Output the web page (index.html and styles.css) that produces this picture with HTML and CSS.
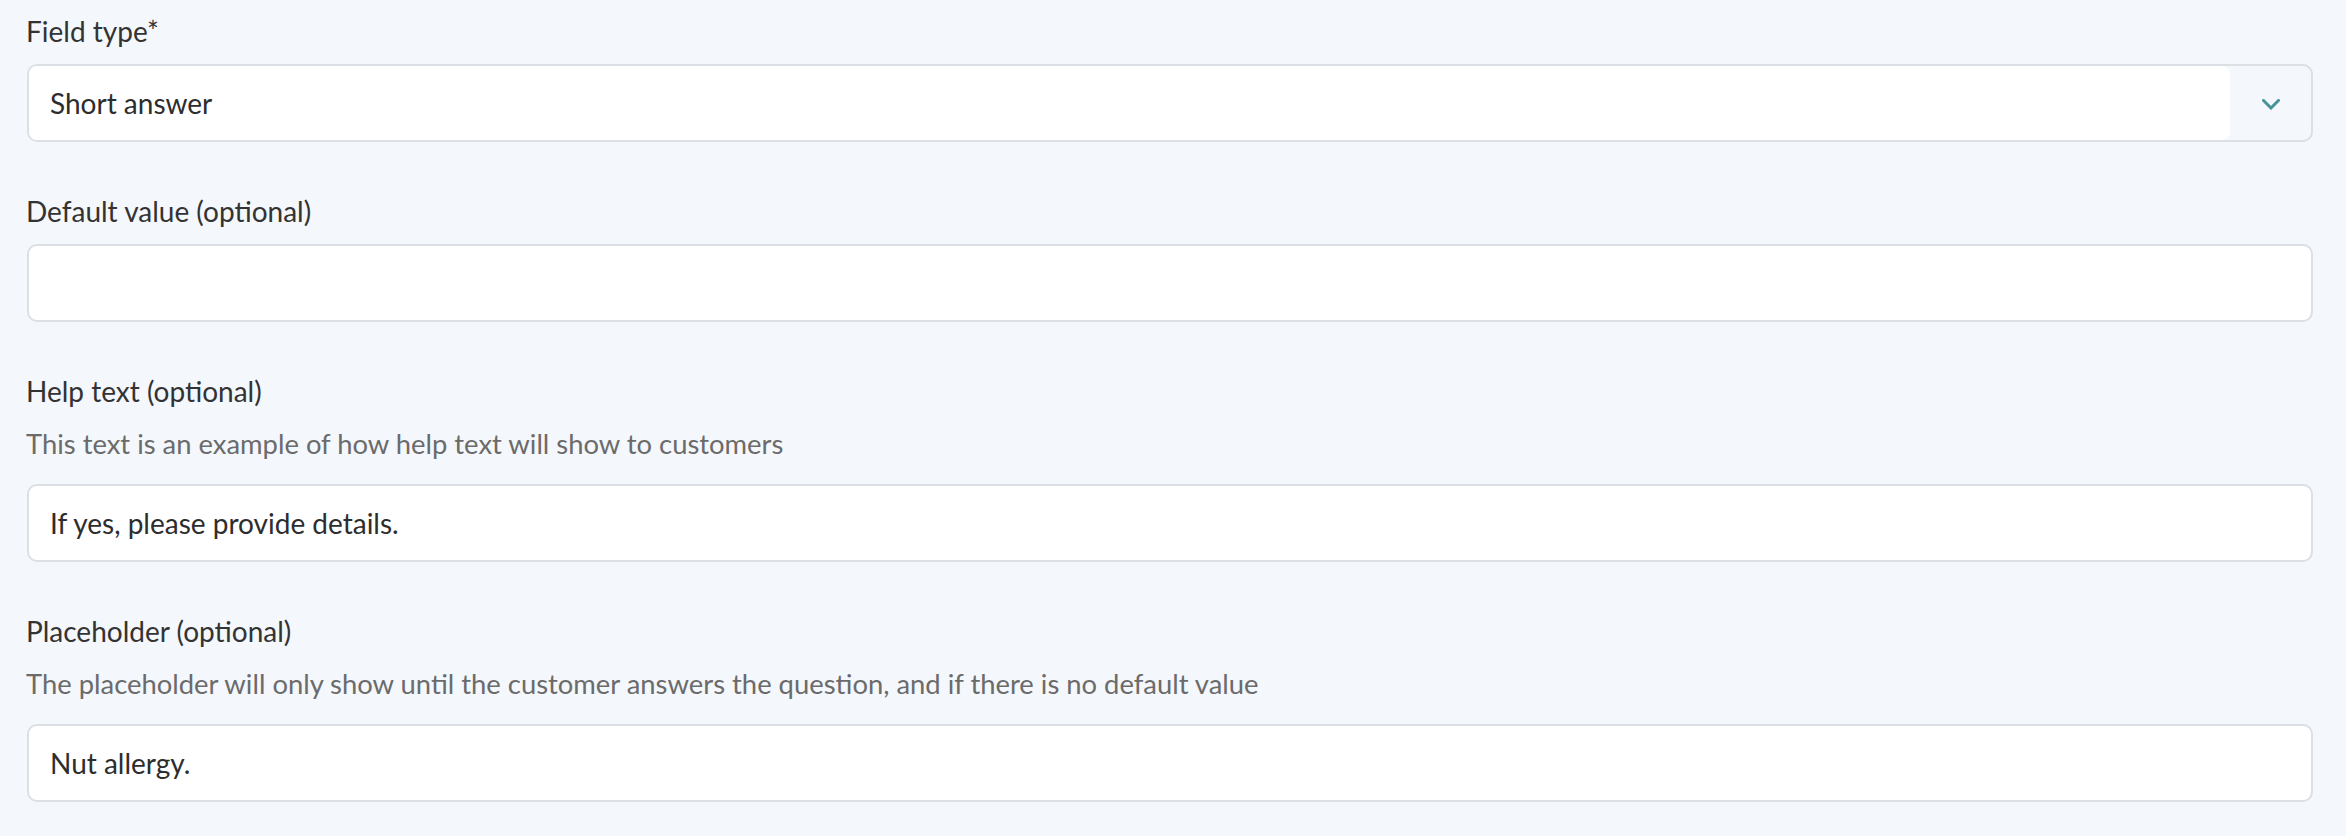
FILE: index.html
```html
<!DOCTYPE html>
<html lang="en">
<head>
<meta charset="utf-8">
<title>Field settings</title>
<link rel="stylesheet" href="styles.css">
</head>
<body>
<form class="form">
  <div class="field">
    <label class="label">Field type*</label>
    <div class="select">
      <div class="select-value">Short answer</div>
      <div class="select-addon">
        <svg class="chevron" viewBox="0 0 18 11" width="18" height="11" aria-hidden="true"><path d="M1.5 1.5 L9 9 L16.5 1.5" fill="none" stroke="#48939a" stroke-width="3" stroke-linecap="square"/></svg>
      </div>
    </div>
  </div>
  <div class="field">
    <label class="label">Default value (optional)</label>
    <div class="input"></div>
  </div>
  <div class="field">
    <label class="label">Help text (optional)</label>
    <p class="help">This text is an example of how help text will show to customers</p>
    <div class="input">If yes, please provide details.</div>
  </div>
  <div class="field">
    <label class="label">Placeholder (optional)</label>
    <p class="help">The placeholder will only show until the customer answers the question, and if there is no default value</p>
    <div class="input">Nut allergy.</div>
  </div>
</form>
</body>
</html>
```

FILE: styles.css
```css
html, body {
  margin: 0;
  padding: 0;
  background: #f4f7fc;
}
body {
  font-family: Lato, "Open Sans", sans-serif;
  color: #333;
}
.form {
  padding: 11px 33px 0 27px;
  display: flex;
  flex-direction: column;
  gap: 49px;
}
.field {
  display: flex;
  flex-direction: column;
}
.label {
  display: block;
  font-size: 28px;
  line-height: 40px;
  color: #333333;
  margin-bottom: 13px;
  margin-left: -1px;
}
.help {
  margin: 0 0 20px -1px;
  font-size: 27.4px;
  line-height: 40px;
  color: #6b6b6b;
}
.input, .select {
  box-sizing: border-box;
  height: 78px;
  border: 2px solid #dcdfe3;
  border-radius: 10px;
  background: #ffffff;
  font-size: 28px;
  color: #2d2d2d;
}
.input {
  display: flex;
  align-items: center;
  padding: 0 21px;
}
.select {
  display: flex;
  background: #f4f7fb;
  overflow: hidden;
}
.select-value {
  flex: 1;
  display: flex;
  align-items: center;
  padding: 0 21px;
  background: #ffffff;
  border-radius: 0 8px 8px 0;
}
.select-addon {
  width: 81px;
  display: flex;
  align-items: center;
  justify-content: center;
}
.chevron {
  display: block;
  margin-top: 2px;
}
```
